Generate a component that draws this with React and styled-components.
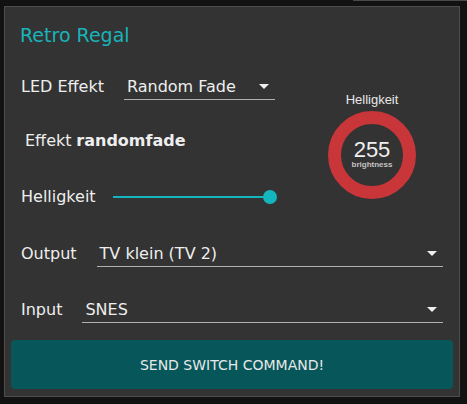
import styled, { createGlobalStyle } from "styled-components";

const GlobalStyle = createGlobalStyle`
  body {
    margin: 0;
    background: #121212;
    font-family: "DejaVu Sans", "Noto Sans", sans-serif;
    color: #eeeeee;
  }
`;

const Page = styled.div`
  display: flex;
  flex-direction: column;
  padding-left: 4px;
`;

const PrevEdge = styled.div`
  height: 1px;
  margin-left: 349px;
  background: #4a4a4a;
`;

const Card = styled.div`
  box-sizing: border-box;
  width: 456px;
  height: 391px;
  margin-top: 5px;
  background: #333333;
  border: 1px solid #4d4d4d;
  padding: 17px 6px 7px;
  display: flex;
  flex-direction: column;
`;

const Title = styled.div`
  padding-left: 9px;
  font-size: 19px;
  line-height: 22px;
  color: #19b3bb;
`;

const Top = styled.div`
  display: flex;
  margin-top: 28px;
  padding-left: 10px;
`;

const LeftCol = styled.div`
  width: 256px;
  display: flex;
  flex-direction: column;
`;

const Row = styled.div`
  display: flex;
  align-items: center;
  gap: ${({ $gap }) => $gap ?? 20}px;
  margin-top: ${({ $mt }) => $mt ?? 0}px;
  padding-left: ${({ $indent }) => $indent ?? 0}px;
  font-size: 16px;
  line-height: 24px;
`;

const Label = styled.span`
  white-space: nowrap;
`;

const Select = styled.div`
  box-sizing: border-box;
  flex: ${({ $width }) => ($width ? "none" : 1)};
  width: ${({ $width }) => ($width ? `${$width}px` : "auto")};
  height: 26px;
  display: flex;
  align-items: center;
  justify-content: space-between;
  padding-left: 3px;
  border-bottom: 1px solid #b0b0b0;
`;

const Arrow = styled.span`
  width: 0;
  height: 0;
  margin-right: 6px;
  border-left: 5px solid transparent;
  border-right: 5px solid transparent;
  border-top: 5px solid #f0f0f0;
`;

const Strong = styled.b`
  margin-left: 0.3em;
`;

const Slider = styled.div`
  position: relative;
  width: 165px;
  height: 14px;
  display: flex;
  align-items: center;
`;

const Track = styled.div`
  width: 158px;
  height: 2px;
  background: #13b5be;
`;

const Thumb = styled.div`
  position: absolute;
  right: 0;
  top: 0;
  width: 14px;
  height: 14px;
  border-radius: 50%;
  background: #13b5be;
`;

const GaugeCol = styled.div`
  flex: 1;
  display: flex;
  flex-direction: column;
  align-items: center;
  margin-top: 19px;
  padding-left: 14px;
`;

const GaugeTitle = styled.div`
  font-family: "Liberation Sans", Arial, sans-serif;
  font-size: 13px;
  line-height: 14px;
  color: #e8e8e8;
`;

const GaugeSvg = styled.svg`
  display: block;
  margin-top: 3px;
`;

const Bottom = styled.div`
  display: flex;
  flex-direction: column;
  padding: 0 10px;
`;

const SendButton = styled.button`
  margin-top: 17px;
  height: 49px;
  border: none;
  border-radius: 4px;
  background: #07575a;
  color: #e8e8e8;
  font-family: "DejaVu Sans", sans-serif;
  font-size: 14px;
  cursor: pointer;
`;

function Gauge({ value, title, label }) {
  return (
    <GaugeCol>
      <GaugeTitle>{title}</GaugeTitle>
      <GaugeSvg width="90" height="90" viewBox="0 0 90 90">
        <circle cx="45" cy="45" r="37.5" fill="none" stroke="#c8363a" strokeWidth="13" />
        <text
          x="45"
          y="47"
          textAnchor="middle"
          fontFamily="Liberation Sans, Arial, sans-serif"
          fontSize="22"
          fill="#f0f0f0"
        >
          {value}
        </text>
        <text
          x="45"
          y="57"
          textAnchor="middle"
          fontFamily="Liberation Sans, Arial, sans-serif"
          fontSize="8"
          fontWeight="bold"
          fill="#c4c4c4"
        >
          {label}
        </text>
      </GaugeSvg>
    </GaugeCol>
  );
}

export default function App() {
  return (
    <>
      <GlobalStyle />
      <Page>
        <PrevEdge />
        <Card>
          <Title>Retro Regal</Title>
          <Top>
            <LeftCol>
              <Row>
                <Label>LED Effekt</Label>
                <Select $width={151}>
                  Random Fade
                  <Arrow />
                </Select>
              </Row>
              <Row $mt={29} $indent={4}>
                <Label>
                  Effekt<Strong>randomfade</Strong>
                </Label>
              </Row>
              <Row $mt={32} $gap={17}>
                <Label>Helligkeit</Label>
                <Slider>
                  <Track />
                  <Thumb />
                </Slider>
              </Row>
            </LeftCol>
            <Gauge value={255} title="Helligkeit" label="brightness" />
          </Top>
          <Bottom>
            <Row $mt={32}>
              <Label>Output</Label>
              <Select>
                TV klein (TV 2)
                <Arrow />
              </Select>
            </Row>
            <Row $mt={30}>
              <Label>Input</Label>
              <Select>
                SNES
                <Arrow />
              </Select>
            </Row>
          </Bottom>
          <SendButton>SEND SWITCH COMMAND!</SendButton>
        </Card>
      </Page>
    </>
  );
}
